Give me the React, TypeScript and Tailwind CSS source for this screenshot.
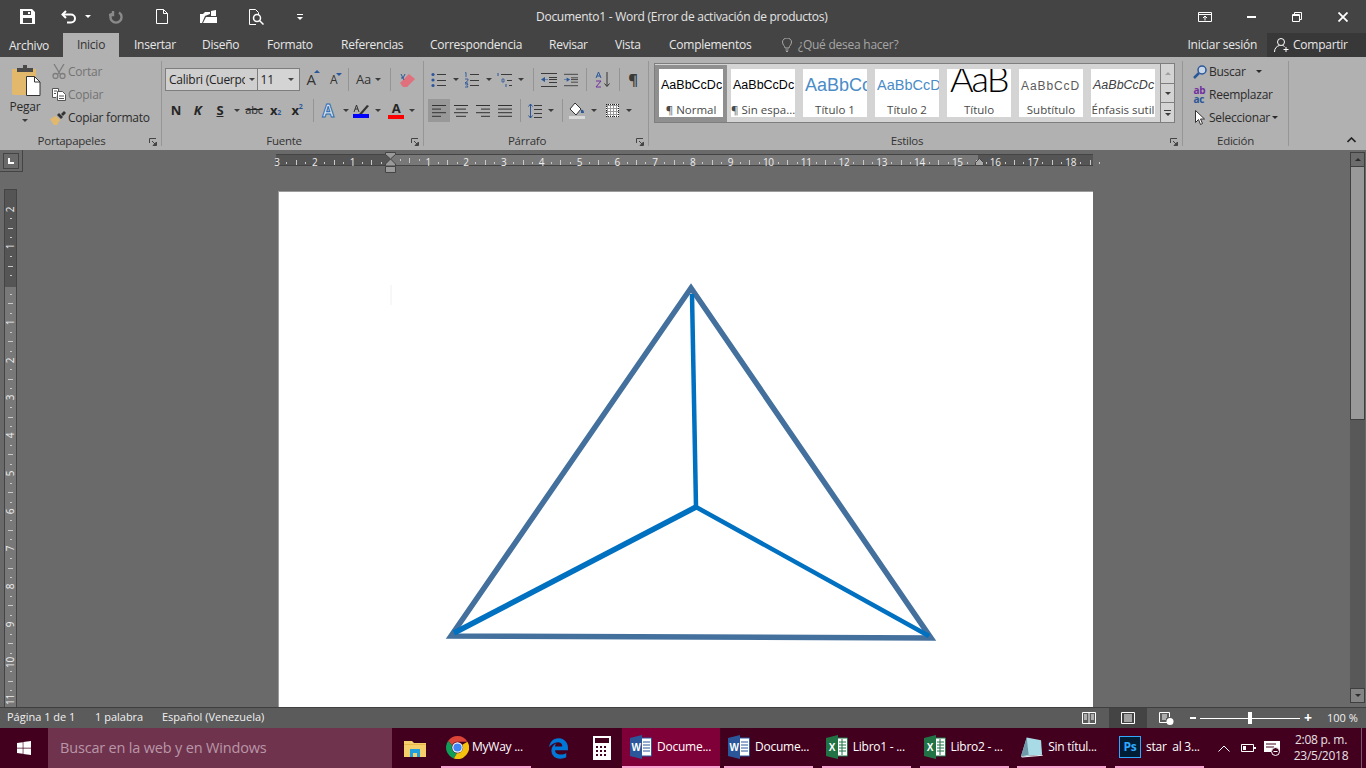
import { FaWindows } from 'react-icons/fa';
import { FaEdgeLegacy } from 'react-icons/fa6';

const TABS = [
  { label: 'Insertar', w: 'w-[68px]' },
  { label: 'Diseño', w: 'w-[65px]' },
  { label: 'Formato', w: 'w-[74px]' },
  { label: 'Referencias', w: 'w-[89px]' },
  { label: 'Correspondencia', w: 'w-[119px]' },
  { label: 'Revisar', w: 'w-[66px]' },
  { label: 'Vista', w: 'w-[54px]' },
  { label: 'Complementos', w: 'w-[113px]' },
];

function Caret({ className = 'text-[#3c3c3c]' }: { className?: string }) {
  return (
    <svg viewBox="0 0 6 3" className={`h-[3px] w-[6px] shrink-0 ${className}`} aria-hidden="true">
      <path d="M0 0h6L3 3z" fill="currentColor" />
    </svg>
  );
}

function Cell({ w, children, className = '' }: { w: string; children?: React.ReactNode; className?: string }) {
  return <div className={`flex h-full shrink-0 items-center justify-center ${w} ${className}`}>{children}</div>;
}

function Sep({ className = '' }: { className?: string }) {
  return <div className={`h-[23px] w-px shrink-0 bg-[#949494] ${className}`} />;
}

function GroupSep() {
  return <div className="my-[4px] w-px shrink-0 bg-[#969696]" />;
}

function Launcher() {
  return (
    <svg viewBox="0 0 8 8" className="absolute bottom-[4px] right-[4px] h-[8px] w-[8px] text-[#444]" fill="none" aria-hidden="true">
      <path d="M.5 5V.5H7" stroke="currentColor" />
      <path d="M3 3l4 4M7.5 4v3.5H4z" stroke="currentColor" fill="currentColor" />
    </svg>
  );
}

function GroupLabel({ children, className = '' }: { children: React.ReactNode; className?: string }) {
  return <div className={`h-[20px] text-center text-[11.5px] leading-[22px] text-[#333] ${className}`}>{children}</div>;
}

function Lines({ rows, x = 0, w = 14, color = '#3a3a3a' }: { rows: number[]; x?: number; w?: number; color?: string }) {
  return (
    <>
      {rows.map((y) => (
        <path key={y} d={`M${x} ${y + 0.5}h${w}`} stroke={color} />
      ))}
    </>
  );
}

function AlignIcon({ kind }: { kind: 'left' | 'center' | 'right' | 'justify' }) {
  const spans =
    kind === 'left'
      ? [[0, 14], [0, 9], [0, 14], [0, 9]]
      : kind === 'center'
        ? [[0, 14], [2, 10], [0, 14], [2, 10]]
        : kind === 'right'
          ? [[0, 14], [5, 9], [0, 14], [5, 9]]
          : [[0, 14], [0, 14], [0, 14], [0, 14]];
  return (
    <svg viewBox="0 0 14 12" className="h-[12px] w-[14px]" fill="none" aria-hidden="true">
      {spans.map(([x, w], i) => (
        <path key={i} d={`M${x} ${i * 3.6 + 0.5}h${w}`} stroke="#333" />
      ))}
    </svg>
  );
}

function ListIcon({ kind }: { kind: 'bullet' | 'number' | 'multi' }) {
  const dot = '#2b579a';
  return (
    <svg viewBox="0 0 16 16" className="h-[16px] w-[16px]" fill="none" aria-hidden="true">
      {kind === 'bullet' && (
        <>
          <circle cx="2" cy="2.5" r="1.6" fill={dot} />
          <circle cx="2" cy="8" r="1.6" fill={dot} />
          <circle cx="2" cy="13.5" r="1.6" fill={dot} />
          <Lines rows={[2, 8, 13]} x={6} w={9} />
        </>
      )}
      {kind === 'number' && (
        <>
          <path d="M1 1l1-.5V5M1 7h3v1.5L1 11h3M1 12h3l-1 1.500 1 1.500H1" stroke={dot} strokeWidth=".9" />
          <Lines rows={[2, 8, 13]} x={6} w={9} />
        </>
      )}
      {kind === 'multi' && (
        <>
          <path d="M1 1v3" stroke={dot} />
          <path d="M5 7h2v3H5z" stroke={dot} strokeWidth=".8" />
          <path d="M9 12v3" stroke={dot} />
          <Lines rows={[2]} x={4} w={11} />
          <Lines rows={[8]} x={10} w={5} />
          <Lines rows={[13]} x={12} w={3} />
        </>
      )}
    </svg>
  );
}

function IndentIcon({ flip }: { flip?: boolean }) {
  return (
    <svg viewBox="0 0 16 14" className="h-[14px] w-[16px]" fill="none" aria-hidden="true">
      <Lines rows={[0, 13]} w={16} />
      <Lines rows={[4, 6, 9]} x={8} w={8} />
      {flip ? (
        <path d="M0 6.500h3V4l4 2.500L3 9V7H0z" fill="#2b579a" />
      ) : (
        <path d="M7 6.500H4V4L0 6.500 4 9V7h3z" fill="#2b579a" />
      )}
    </svg>
  );
}

function QatIcons() {
  return (
    <div className="flex h-full items-center text-white">
      <Cell w="w-[54px]">
        <svg viewBox="0 0 15 15" className="h-[15px] w-[15px]" aria-hidden="true">
          <path fillRule="evenodd" d="M0 0h12l3 3v12H0zM3 2v4h8V2zM3 9v5h9V9z" fill="#fff" />
          <path d="M8 3h2v2H8z" fill="#fff" />
        </svg>
      </Cell>
      <Cell w="w-[30px]">
        <svg viewBox="0 0 16 14" className="h-[14px] w-[16px]" fill="none" aria-hidden="true">
          <path d="M5 1L1.500 4.500 5 8" stroke="#fff" strokeWidth="2" />
          <path d="M2 4.500h8a4 4 0 0 1 0 8H6" stroke="#fff" strokeWidth="2" />
        </svg>
      </Cell>
      <Cell w="w-[8px]">
        <Caret className="text-white" />
      </Cell>
      <Cell w="w-[48px]">
        <svg viewBox="0 0 14 14" className="h-[14px] w-[14px]" fill="none" aria-hidden="true">
          <path d="M4 2.500a5.500 5.500 0 1 0 6 0M4 1v4H0" stroke="#8a8a8a" strokeWidth="2.400" />
        </svg>
      </Cell>
      <Cell w="w-[44px]">
        <svg viewBox="0 0 12 15" className="h-[15px] w-[12px]" fill="none" aria-hidden="true">
          <path d="M.5.500h7l4 4v10H.5zM7.500.500v4h4" stroke="#fff" />
        </svg>
      </Cell>
      <Cell w="w-[48px]">
        <svg viewBox="0 0 17 13" className="h-[13px] w-[17px]" aria-hidden="true">
          <path d="M0 13V4h3l2-2h5v2L5 6 2 13zM3 13l3-6h11v6zM11 1l5-1v6h-5z" fill="#fff" />
        </svg>
      </Cell>
      <Cell w="w-[48px]">
        <svg viewBox="0 0 15 16" className="h-[16px] w-[15px]" fill="none" aria-hidden="true">
          <path d="M7 15.500H.5V.500h6l3 3v2" stroke="#fff" />
          <circle cx="8" cy="9" r="3.500" stroke="#fff" strokeWidth="1.500" />
          <path d="M10.500 11.500l4 4" stroke="#fff" strokeWidth="1.500" />
        </svg>
      </Cell>
      <Cell w="w-[40px]">
        <div className="flex flex-col items-center gap-[2px]">
          <div className="h-px w-[6px] bg-white" />
          <Caret className="text-white" />
        </div>
      </Cell>
    </div>
  );
}

function TitleBar() {
  return (
    <div className="flex h-[33px] shrink-0 items-center bg-[#444444] text-[#e4e4e4]">
      <QatIcons />
      <div className="ml-[216px] whitespace-nowrap text-[12px] tracking-[-0.27px]">
        Documento1 - Word (Error de activación de productos)
      </div>
      <div className="ml-auto flex h-full">
        <Cell w="w-[46px]">
          <svg viewBox="0 0 14 10" className="h-[10px] w-[14px]" fill="none" aria-hidden="true">
            <path d="M.5.500h13v9H.5zM.5 2.500h13" stroke="#fff" />
            <path d="M7 8.500V4.500M5 6l2-2 2 2" stroke="#fff" />
          </svg>
        </Cell>
        <Cell w="w-[46px]">
          <div className="h-[2px] w-[9px] bg-white" />
        </Cell>
        <Cell w="w-[46px]">
          <svg viewBox="0 0 10 10" className="h-[10px] w-[10px]" fill="none" aria-hidden="true">
            <path d="M.5 2.500h7v7h-7zM2.500 2.500v-2h7v7h-2" stroke="#fff" />
            <path d="M.5 3.500h7" stroke="#fff" />
          </svg>
        </Cell>
        <Cell w="w-[46px]">
          <svg viewBox="0 0 10 10" className="h-[10px] w-[10px]" fill="none" aria-hidden="true">
            <path d="M.5.500l9 9M9.500.500l-9 9" stroke="#fff" strokeWidth="1.800" />
          </svg>
        </Cell>
      </div>
    </div>
  );
}

function TabBar() {
  return (
    <div className="flex h-[24px] shrink-0 items-center bg-[#444444] text-[12px] text-[#e8e8e8]">
      <div className="w-[63px] pl-[9px] pt-[2px]">Archivo</div>
      <div className="flex h-full w-[56px] items-center justify-center bg-[#b1b1b1] text-[#333]">Inicio</div>
      <div className="flex h-full pl-[15px]">
        {TABS.map((t) => (
          <div key={t.label} className={`flex items-center whitespace-nowrap ${t.w}`}>
            {t.label}
          </div>
        ))}
      </div>
      <svg viewBox="0 0 10 14" className="h-[14px] w-[10px] shrink-0" fill="none" aria-hidden="true">
        <path d="M3 10c0-2-2.500-3-2.500-6a4.500 4 0 0 1 9 0c0 3-2.500 4-2.500 6zM3.500 12h3M4 13.500h2" stroke="#a8a8a8" />
      </svg>
      <div className="ml-[6px] whitespace-nowrap text-[#a6a6a6]">¿Qué desea hacer?</div>
      <div className="ml-auto whitespace-nowrap">Iniciar sesión</div>
      <div className="ml-[10px] flex h-full w-[99px] items-center gap-[3px] bg-[#383838] pl-[7px]">
        <svg viewBox="0 0 16 16" className="h-[16px] w-[16px]" fill="none" aria-hidden="true">
          <circle cx="7" cy="5" r="3.500" stroke="#fff" />
          <path d="M.5 15c0-4 2.500-6 5-6.500M8.500 8.500c1 .2 1.500.5 2 1M12 10v5M9.500 12.500h5" stroke="#fff" />
        </svg>
        <span>Compartir</span>
      </div>
    </div>
  );
}

function ClipRow({ icon, children, muted }: { icon: React.ReactNode; children: React.ReactNode; muted?: boolean }) {
  return (
    <div className={`flex h-[23px] items-center whitespace-nowrap text-[12px] ${muted ? 'text-[#737373]' : 'text-[#2b2b2b]'}`}>
      <div className="flex w-[18px] justify-center">{icon}</div>
      {children}
    </div>
  );
}

function Portapapeles() {
  return (
    <div className="relative flex w-[161px] shrink-0 flex-col">
      <div className="flex h-[74px] pt-[3px]">
        <div className="flex w-[50px] flex-col items-center text-[12px] text-[#2b2b2b]">
          <svg viewBox="0 0 29 31" className="ml-[3px] mt-[5px] h-[31px] w-[29px]" aria-hidden="true">
            <path d="M0 4h24v26H2a2 2 0 0 1-2-2z" fill="#e2b96c" />
            <path d="M5 3h6V0h4v3h6v4H5z" fill="#4a4a4a" />
            <path d="M14.500 11.500h8l5.500 5.500v13.500H14.500z" fill="#fff" stroke="#333" />
            <path d="M22.500 11.500V17H28" fill="none" stroke="#333" />
          </svg>
          <div className="mt-[2px] leading-[18px]">Pegar</div>
          <div className="mt-[3px]">
            <Caret />
          </div>
        </div>
        <div className="flex flex-col">
          <ClipRow
            muted
            icon={
              <svg viewBox="0 0 14 15" className="h-[15px] w-[14px]" fill="none" aria-hidden="true">
                <path d="M2 0l6 10M12 0L6 10" stroke="#7d7d7d" strokeWidth="1.300" />
                <circle cx="3.500" cy="12" r="2.500" stroke="#7d7d7d" strokeWidth="1.300" />
                <circle cx="10.500" cy="12" r="2.500" stroke="#7d7d7d" strokeWidth="1.300" />
              </svg>
            }
          >
            Cortar
          </ClipRow>
          <ClipRow
            muted
            icon={
              <svg viewBox="0 0 14 13" className="h-[13px] w-[14px]" fill="none" aria-hidden="true">
                <path d="M4 9.500H.5V.500h6v3" fill="#fff" stroke="#555" />
                <path d="M5.500 3.500h5l3 3v6h-8z" fill="#fff" stroke="#555" />
                <path d="M7 8h5M7 10.500h5M2 3h3M2 5.500h2" stroke="#555" />
              </svg>
            }
          >
            Copiar
          </ClipRow>
          <ClipRow
            icon={
              <svg viewBox="0 0 16 14" className="-ml-[2px] h-[14px] w-[16px]" aria-hidden="true">
                <path d="M0 8l6-3 4 4-3 5H4z" fill="#e2b96c" />
                <path d="M7 4l2-2 4 4-2 2z" fill="#333" />
                <path d="M11 3l3-3 2 2-3 3z" fill="#333" />
              </svg>
            }
          >
            Copiar formato
          </ClipRow>
        </div>
      </div>
      <GroupLabel className="pr-[18px]">Portapapeles</GroupLabel>
      <Launcher />
    </div>
  );
}

function Fuente() {
  return (
    <div className="relative flex w-[261px] shrink-0 flex-col">
      <div className="h-[74px] pl-[3px] pt-[11px]">
        <div className="flex h-[23px] items-center">
          <div className="flex h-[23px] w-[94px] items-center border border-[#7e7e7e] bg-[#cfcfcf] pl-[3px] text-[12px] text-[#222]">
            <div className="w-[76px] overflow-hidden whitespace-nowrap">Calibri (Cuerpo)</div>
            <Caret className="ml-[4px] text-[#444]" />
          </div>
          <div className="flex h-[23px] w-[43px] items-center justify-between border border-l-0 border-[#7e7e7e] bg-[#d4d4d4] pl-[3px] pr-[5px] text-[12px] text-[#222]">
            11
            <Caret className="text-[#444]" />
          </div>
          <Cell w="w-[22px]">
            <span className="relative text-[15px] text-[#333]">
              A<span className="absolute -right-[4px] top-[2px] h-0 w-0 border-x-[3px] border-b-[3px] border-x-transparent border-b-[#2b579a]" />
            </span>
          </Cell>
          <Cell w="w-[23px]">
            <span className="relative text-[12px] text-[#333]">
              A<span className="absolute -right-[5px] top-[2px] h-0 w-0 border-x-[3px] border-t-[3px] border-x-transparent border-t-[#2b579a]" />
            </span>
          </Cell>
          <Sep className="ml-[3px]" />
          <div className="ml-[7px] flex items-center gap-[4px] text-[13px] text-[#333]">
            Aa
            <Caret />
          </div>
          <Sep className="ml-[9px]" />
          <Cell w="w-[32px]">
            <svg viewBox="0 0 15 14" className="h-[14px] w-[15px]" aria-hidden="true">
              <path d="M3 14L0 10l9-9 6 5-8 8z" fill="#e0707c" />
              <path d="M1 1l3 6M5 1L3 5H1" stroke="#2b579a" fill="none" />
            </svg>
          </Cell>
        </div>
        <div className="mt-[8px] flex h-[23px] items-center text-[#262626]">
          <Cell w="w-[22px]" className="text-[13px] font-bold">N</Cell>
          <Cell w="w-[21px]" className="text-[13px] font-bold italic">K</Cell>
          <Cell w="w-[24px]" className="text-[13px] font-bold underline">S</Cell>
          <Cell w="w-[9px]"><Caret /></Cell>
          <Cell w="w-[26px]" className="text-[11px] line-through">abc</Cell>
          <Cell w="w-[17px]" className="text-[13px] font-bold">
            x<span className="mt-[6px] text-[7px] text-[#2b579a]">2</span>
          </Cell>
          <Cell w="w-[26px]" className="text-[13px] font-bold">
            x<span className="-mt-[6px] text-[7px] text-[#2b579a]">2</span>
          </Cell>
          <Sep className="ml-[3px]" />
          <Cell w="w-[28px]" className="text-[17px] font-bold text-[#dce6f1] [-webkit-text-stroke:1px_#2b6cb0]">A</Cell>
          <Cell w="w-[8px]"><Caret /></Cell>
          <Cell w="w-[22px]">
            <div className="flex flex-col items-center">
              <svg viewBox="0 0 16 11" className="h-[11px] w-[16px]" aria-hidden="true">
                <path d="M7 10l7-8 2 1-7 8H6z" fill="#333" />
                <path d="M1 9l2.500-7L6 9M2 6h3" fill="none" stroke="#333" />
              </svg>
              <div className="h-[4px] w-[16px] bg-[#0000ff]" />
            </div>
          </Cell>
          <Cell w="w-[12px]"><Caret /></Cell>
          <Cell w="w-[24px]">
            <div className="flex flex-col items-center">
              <span className="text-[13px] font-bold leading-[11px]">A</span>
              <div className="mt-[1px] h-[4px] w-[16px] bg-[#ff0000]" />
            </div>
          </Cell>
          <Cell w="w-[8px]"><Caret /></Cell>
        </div>
      </div>
      <GroupLabel className="pr-[17px]">Fuente</GroupLabel>
      <Launcher />
    </div>
  );
}

function Parrafo() {
  return (
    <div className="relative flex w-[224px] shrink-0 flex-col">
      <div className="h-[74px] pt-[11px]">
        <div className="flex h-[23px] items-center">
          <Cell w="w-[29px]"><ListIcon kind="bullet" /></Cell>
          <Cell w="w-[5px]"><Caret /></Cell>
          <Cell w="w-[27px]"><ListIcon kind="number" /></Cell>
          <Cell w="w-[8px]"><Caret /></Cell>
          <Cell w="w-[24px]"><ListIcon kind="multi" /></Cell>
          <Cell w="w-[8px]"><Caret /></Cell>
          <Sep className="ml-[8px]" />
          <Cell w="w-[30px]"><IndentIcon /></Cell>
          <Cell w="w-[14px]"><IndentIcon flip /></Cell>
          <Sep className="ml-[8px]" />
          <Cell w="w-[32px]">
            <svg viewBox="0 0 16 17" className="h-[17px] w-[16px]" fill="none" aria-hidden="true">
              <path d="M1 7l2.500-6L6 7M1.800 5h3.500" stroke="#2b579a" />
              <path d="M1 10h5l-5 6h5" stroke="#7030a0" />
              <path d="M12 1v14M9.500 12.500l2.500 3 2.500-3" stroke="#333" />
            </svg>
          </Cell>
          <Sep />
          <Cell w="w-[26px]" className="text-[15px] font-bold text-[#3a3a3a]">¶</Cell>
        </div>
        <div className="mt-[8px] flex h-[23px] items-center pl-[4px]">
          <Cell w="w-[22px]" className="bg-[#989898]"><AlignIcon kind="left" /></Cell>
          <Cell w="w-[22px]"><AlignIcon kind="center" /></Cell>
          <Cell w="w-[22px]"><AlignIcon kind="right" /></Cell>
          <Cell w="w-[22px]"><AlignIcon kind="justify" /></Cell>
          <Sep className="ml-[4px]" />
          <Cell w="w-[28px]">
            <svg viewBox="0 0 14 16" className="h-[16px] w-[14px]" fill="none" aria-hidden="true">
              <path d="M2.500 1v14M.5 3.500l2-2.500 2 2.500M.5 12.500l2 2.500 2-2.500" stroke="#2b579a" />
              <Lines rows={[2, 6, 10, 14]} x={6} w={8} />
            </svg>
          </Cell>
          <Cell w="w-[4px]"><Caret /></Cell>
          <Sep className="ml-[9px]" />
          <Cell w="w-[28px]">
            <div className="flex flex-col items-center">
              <svg viewBox="0 0 16 12" className="h-[12px] w-[16px]" aria-hidden="true">
                <path d="M6 0l6 6-5 6-6-6z" fill="#fff" stroke="#333" />
                <path d="M12 7c2-1 3 1 3 3h-3z" fill="#2b579a" />
              </svg>
              <div className="mt-[1px] h-[3px] w-[16px] bg-[#d9d9d9]" />
            </div>
          </Cell>
          <Cell w="w-[6px]"><Caret /></Cell>
          <Cell w="w-[30px]">
            <div className="h-[13px] w-[13px] border border-dotted border-[#222] bg-white [background-image:linear-gradient(#999_1px,transparent_1px),linear-gradient(90deg,#999_1px,transparent_1px)] [background-size:3px_3px]" />
          </Cell>
          <Cell w="w-[4px]"><Caret /></Cell>
        </div>
      </div>
      <GroupLabel className="pr-[18px]">Párrafo</GroupLabel>
      <Launcher />
    </div>
  );
}

function StyleItem({ label, children }: { label: string; children: React.ReactNode }) {
  return (
    <div className="flex h-[48px] w-[64px] shrink-0 flex-col overflow-hidden bg-white">
      <div className="flex h-[33px] items-center overflow-hidden whitespace-nowrap pl-[2px] font-['Liberation_Sans',sans-serif] tracking-normal">
        {children}
      </div>
      <div className="whitespace-nowrap text-center text-[11.5px] leading-[15px] tracking-normal text-[#4a4a4a]">{label}</div>
    </div>
  );
}

function Estilos() {
  return (
    <div className="relative flex w-[533px] shrink-0 flex-col">
      <div className="h-[74px] pl-[5px] pt-[6px]">
        <div className="flex h-[60px] w-[521px] border border-[#7e7e7e] bg-[#d4d4d4]">
          <div className="flex h-[58px] w-[506px] items-start">
            <div className="mt-[1px] flex h-[57px] w-[72px] shrink-0 items-start border-[4px] border-[#8f8f8f] bg-[#8f8f8f]">
              <StyleItem label="¶ Normal">
                <span className="text-[12.5px] text-black">AaBbCcDc</span>
              </StyleItem>
            </div>
            <div className="mt-[5px] flex gap-[8px] pl-[4px]">
              <StyleItem label="¶ Sin espa...">
                <span className="text-[12.5px] text-black">AaBbCcDc</span>
              </StyleItem>
              <StyleItem label="Título 1">
                <span className="text-[18px] text-[#4a8cc7]">AaBbCc</span>
              </StyleItem>
              <StyleItem label="Título 2">
                <span className="text-[14.5px] text-[#4a8cc7]">AaBbCcD</span>
              </StyleItem>
              <StyleItem label="Título">
                <span className="-mt-[15px] pl-[1px] font-['Lato',sans-serif] text-[36px] font-light leading-[36px] tracking-[-2px] text-black">AaB</span>
              </StyleItem>
              <StyleItem label="Subtítulo">
                <span className="text-[12px] tracking-[0.9px] text-[#5a5a5a]">AaBbCcD</span>
              </StyleItem>
              <StyleItem label="Énfasis sutil">
                <span className="text-[12.5px] italic text-[#404040]">AaBbCcDc</span>
              </StyleItem>
            </div>
          </div>
          <div className="flex w-[14px] flex-col border-l border-[#7e7e7e]">
            <div className="flex h-[20px] items-center justify-center border-b border-[#7e7e7e]">
              <Caret className="rotate-180 text-[#a0a0a0]" />
            </div>
            <div className="flex h-[19px] items-center justify-center border-b border-[#7e7e7e]">
              <Caret />
            </div>
            <div className="flex flex-1 flex-col items-center justify-center gap-[2px]">
              <div className="h-px w-[7px] bg-[#3c3c3c]" />
              <Caret />
            </div>
          </div>
        </div>
      </div>
      <GroupLabel className="pr-[17px]">Estilos</GroupLabel>
      <Launcher />
    </div>
  );
}

function Edicion() {
  return (
    <div className="flex w-[105px] shrink-0 flex-col">
      <div className="h-[74px] pl-[8px] pt-[3px]">
        <ClipRow
          icon={
            <svg viewBox="0 0 14 14" className="h-[14px] w-[14px]" fill="none" aria-hidden="true">
              <circle cx="9" cy="5" r="4" fill="#c9d6e6" stroke="#2b579a" strokeWidth="1.500" />
              <path d="M6 8l-5 5" stroke="#2b579a" strokeWidth="2.500" />
            </svg>
          }
        >
          Buscar
          <Caret className="ml-[10px]" />
        </ClipRow>
        <ClipRow
          icon={
            <div className="-ml-[1px] flex flex-col text-[10px] font-bold leading-[9px]">
              <span className="text-[#7030a0]">ab</span>
              <span className="text-[#2b579a]">ac</span>
            </div>
          }
        >
          Reemplazar
        </ClipRow>
        <ClipRow
          icon={
            <svg viewBox="0 0 10 15" className="h-[15px] w-[10px]" aria-hidden="true">
              <path d="M.5.500v12l3-3 2 5 2-1-2-4.500h4z" fill="#fff" stroke="#333" />
            </svg>
          }
        >
          Seleccionar
          <Caret className="ml-[2px]" />
        </ClipRow>
      </div>
      <GroupLabel>Edición</GroupLabel>
    </div>
  );
}

function Ribbon() {
  return (
    <div className="flex h-[93px] shrink-0 bg-[#b1b1b1]">
      <Portapapeles />
      <GroupSep />
      <Fuente />
      <GroupSep />
      <Parrafo />
      <GroupSep />
      <Estilos />
      <GroupSep />
      <Edicion />
      <GroupSep />
      <div className="flex flex-1 items-end justify-end pb-[7px] pr-[10px]">
        <svg viewBox="0 0 9 6" className="h-[6px] w-[9px]" fill="none" aria-hidden="true">
          <path d="M.5 5l4-4 4 4" stroke="#222" strokeWidth="1.600" />
        </svg>
      </div>
    </div>
  );
}

function HCell({ label, w = 'w-[37.8px]' }: { label?: number; w?: string }) {
  return (
    <div className={`grid h-full shrink-0 grid-cols-[9.45px_9.45px_9.45px_9.45px] items-center ${w}`}>
      <div className="relative flex h-full w-0 items-center justify-center text-[10px] text-[#eee]">{label}</div>
      <div className="h-[2px] w-px bg-[#c8c8c8]" />
      <div className="h-[5px] w-px bg-[#c8c8c8]" />
      <div className="h-[2px] w-px bg-[#c8c8c8]" />
    </div>
  );
}

function HRuler() {
  const left = [3, 2, 1, undefined];
  const right = Array.from({ length: 17 }, (_, i) => i + 1);
  return (
    <div className="relative flex h-[12px] w-[817px] shrink-0 border-y border-[#444] bg-[linear-gradient(90deg,#555_114px,#787878_114px,#787878_702px,#555_702px)] pl-px">
      {left.map((n, i) => (
        <HCell key={i} label={n} />
      ))}
      {right.map((n) => (
        <HCell key={n} label={n} />
      ))}
      <HCell label={18} w="w-[22px]" />
      {/* indent markers */}
      <svg viewBox="0 0 11 21" className="absolute -top-[3px] left-[109px] h-[21px] w-[11px]" aria-hidden="true">
        <path d="M.5.500h10v2L5.500 7 .5 2.500z" fill="#9a9a9a" stroke="#444" />
        <path d="M5.500 7l5 5v2H.5v-2z" fill="#9a9a9a" stroke="#444" />
        <path d="M.5 14.500h10v6H.5z" fill="#9a9a9a" stroke="#444" />
      </svg>
      <svg viewBox="0 0 9 8" className="absolute left-[699px] top-[3px] h-[8px] w-[9px]" aria-hidden="true">
        <path d="M4.500.500l4 4v3h-8v-3z" fill="#a8a8a8" stroke="#444" />
      </svg>
    </div>
  );
}

function VCell({ label }: { label?: number }) {
  return (
    <div className="grid w-full shrink-0 grid-rows-[9.45px_9.45px_9.45px_9.45px] justify-items-center">
      <div className="flex h-0 w-full items-center justify-center text-[10px] text-[#eee]">
        <span className="-rotate-90">{label}</span>
      </div>
      <div className="h-px w-[2px] bg-[#c8c8c8]" />
      <div className="h-px w-[5px] bg-[#c8c8c8]" />
      <div className="h-px w-[2px] bg-[#c8c8c8]" />
    </div>
  );
}

function VRuler() {
  const below = Array.from({ length: 11 }, (_, i) => i + 1);
  return (
    <div className="flex min-h-0 w-[13px] flex-1 flex-col overflow-hidden border-x border-t border-[#444] bg-[linear-gradient(180deg,#555_97px,#787878_97px)] pt-[19px]">
      <VCell label={2} />
      <VCell label={1} />
      <VCell />
      {below.map((n) => (
        <VCell key={n} label={n} />
      ))}
    </div>
  );
}

function Page() {
  return (
    <div className="relative ml-[2px] mt-[25px] flex-1 border-l border-t border-[#9c9c9c] bg-white">
      <svg viewBox="0 0 814 515" className="absolute inset-0 h-full w-full" fill="none" aria-hidden="true">
        <path d="M112 93v20" stroke="#f0f0f0" />
        <path d="M412 96L172 444l480 2z" stroke="#44709d" strokeWidth="5.500" />
        <path d="M413 102l4 213" stroke="#0070c0" strokeWidth="4.500" />
        <path d="M417 315L175 441" stroke="#0070c0" strokeWidth="5.500" />
        <path d="M417 315l233 129" stroke="#0070c0" strokeWidth="4.500" />
      </svg>
    </div>
  );
}

function Scrollbar() {
  return (
    <div className="flex h-full w-[15px] flex-col pb-[4px] pt-[2px]">
      <div className="flex h-[15px] items-center justify-center border border-[#3f3f3f] bg-[#6c6c6c]">
        <Caret className="rotate-180 text-[#2b2b2b]" />
      </div>
      <div className="h-[253px] border border-t-0 border-[#3f3f3f] bg-[#999999]" />
      <div className="flex-1 bg-[#585858]" />
      <div className="flex h-[15px] items-center justify-center border border-[#3f3f3f] bg-[#848484]">
        <Caret className="text-[#2b2b2b]" />
      </div>
    </div>
  );
}

function DocArea() {
  return (
    <div className="flex h-[557px] shrink-0 bg-[#6a6a6a]">
      <div className="flex w-[276px] shrink-0 flex-col">
        <div className="flex h-[22px] w-[23px] shrink-0 items-center justify-center border-b border-r border-[#444]">
          <div className="flex h-[16px] w-[16px] items-center justify-center border border-[#444]">
            <svg viewBox="0 0 6 6" className="h-[6px] w-[6px]" aria-hidden="true">
              <path d="M0 0h2v4h4v2H0z" fill="#fff" />
            </svg>
          </div>
        </div>
        <div className="ml-[4px] mt-[17px] flex min-h-0 flex-1 flex-col">
          <VRuler />
        </div>
      </div>
      <div className="flex w-[817px] shrink-0 flex-col pt-[4px]">
        <HRuler />
        <Page />
      </div>
      <div className="flex flex-1 justify-end pr-px">
        <Scrollbar />
      </div>
    </div>
  );
}

function StatusBar() {
  return (
    <div className="flex h-[21px] shrink-0 items-center border-t border-[#3f3f3f] bg-[#5b5b5b] text-[11px] tracking-normal text-[#f0f0f0]">
      <div className="flex items-center pb-[1px]">
        <div className="w-[95px] whitespace-nowrap pl-[7px]">Página 1 de 1</div>
        <div className="w-[67px] whitespace-nowrap">1 palabra</div>
        <div className="whitespace-nowrap">Español (Venezuela)</div>
      </div>
      <div className="ml-auto flex h-full items-center">
        <Cell w="w-[38px]">
          <svg viewBox="0 0 14 12" className="h-[12px] w-[14px]" fill="none" aria-hidden="true">
            <path d="M.5.500h13v11H.5zM7 .5v11M2 3h3M2 5h3M2 7h3M9 3h3M9 5h3M9 7h3" stroke="#fff" />
          </svg>
        </Cell>
        <Cell w="w-[38px]" className="ml-px bg-[#444]">
          <svg viewBox="0 0 14 12" className="h-[12px] w-[14px]" fill="none" aria-hidden="true">
            <path d="M.5.500h13v11H.5zM3 3h8M3 5h8M3 7h8M3 9h8" stroke="#fff" />
          </svg>
        </Cell>
        <Cell w="w-[38px]">
          <svg viewBox="0 0 15 13" className="h-[13px] w-[15px]" fill="none" aria-hidden="true">
            <path d="M8 10.500H.5V.500h10V5M3 3h5M3 5h5M3 7h4" stroke="#fff" />
            <circle cx="11" cy="9.500" r="3.500" fill="#fff" />
          </svg>
        </Cell>
        <Cell w="w-[15px]">
          <div className="h-[2px] w-[6px] bg-white" />
        </Cell>
        <div className="relative flex h-full w-[100px] items-center">
          <div className="h-px w-full bg-white" />
          <div className="absolute left-[48px] top-[4px] h-[12px] w-[4px] bg-white" />
        </div>
        <Cell w="w-[16px]">
          <span className="text-[14px] font-bold leading-none text-white">+</span>
        </Cell>
        <div className="w-[50px] whitespace-nowrap pl-[11px]">100 %</div>
      </div>
    </div>
  );
}

function WordIcon() {
  return (
    <svg viewBox="0 0 22 24" className="h-[24px] w-[22px] shrink-0" aria-hidden="true">
      <path d="M9 3h12.500v18H9z" fill="#fff" stroke="#2b579a" />
      <path d="M13 7h7M13 10h7M13 13h7M13 16h7" stroke="#2b579a" strokeWidth="1" />
      <path d="M0 3l12-3v24L0 21z" fill="#2b579a" />
      <text x="6" y="16" textAnchor="middle" fontSize="10" fontWeight="700" fill="#fff" fontFamily="Liberation Sans">W</text>
    </svg>
  );
}

function ExcelIcon() {
  return (
    <svg viewBox="0 0 22 24" className="h-[24px] w-[22px] shrink-0" aria-hidden="true">
      <path d="M9 3h12.500v18H9z" fill="#fff" stroke="#217346" />
      <path d="M13 7h7M13 10h7M13 13h7M13 16h7M16 4v16" stroke="#217346" strokeWidth="1" />
      <path d="M0 3l12-3v24L0 21z" fill="#217346" />
      <text x="6" y="16" textAnchor="middle" fontSize="10" fontWeight="700" fill="#fff" fontFamily="Liberation Sans">X</text>
    </svg>
  );
}

function ChromeIcon() {
  return (
    <svg viewBox="0 0 24 24" className="h-[23px] w-[23px] shrink-0" aria-hidden="true">
      <path d="M12 0a12 12 0 0 1 10.400 6H12a6 6 0 0 0-5.600 3.800L2.300 5A12 12 0 0 1 12 0z" fill="#db4437" />
      <path d="M2.300 5l4.100 4.800a6 6 0 0 0 5 8.200L8.200 23.400A12 12 0 0 1 2.300 5z" fill="#0f9d58" />
      <path d="M22.400 6A12 12 0 0 1 8.200 23.400L11.400 18A6 6 0 0 0 17 9z" fill="#f4c20d" />
      <circle cx="12" cy="12" r="5.500" fill="#fff" />
      <circle cx="12" cy="12" r="4.300" fill="#4285f4" />
    </svg>
  );
}

function TaskItem({
  icon,
  label,
  w,
  pl = 'pl-[4px]',
  active,
}: {
  icon: React.ReactNode;
  label: string;
  w: string;
  pl?: string;
  active?: boolean;
}) {
  return (
    <div
      className={`flex h-full shrink-0 items-center gap-[5px] border-b-2 border-[#f7a3d2] ${pl} ${w} ${
        active ? 'bg-[#7f0038]' : ''
      }`}
    >
      {icon}
      <span className="whitespace-pre text-[12px] text-white">{label}</span>
    </div>
  );
}

function Taskbar() {
  return (
    <div className="flex h-[40px] shrink-0 bg-[#42001e]">
      <Cell w="w-[48px]">
        <FaWindows className="h-[16px] w-[16px] text-white" />
      </Cell>
      <div className="flex h-full w-[344px] items-center bg-[#70334d] pl-[12px] text-[14.5px] tracking-[-0.18px] text-[#b897a8]">
        Buscar en la web y en Windows
      </div>
      <Cell w="w-[49px]" className="pr-[3px]">
        <svg viewBox="0 0 22 18" className="h-[18px] w-[22px]" aria-hidden="true">
          <path d="M0 2h8l2 2h12v14H0z" fill="#f5cf6c" />
          <path d="M0 5h22v1H0z" fill="#e8b94a" />
          <path d="M6 10h10v8H6z" fill="#1f9fe0" />
          <path d="M9 14h4v4H9z" fill="#f5cf6c" />
        </svg>
      </Cell>
      <div className="flex h-full w-[90px] shrink-0 items-center gap-[3px] border-b-2 border-[#f7a3d2] pl-[5px]">
        <ChromeIcon />
        <span className="whitespace-nowrap text-[12px] text-white">MyWay ...</span>
      </div>
      <Cell w="w-[50px]" className="pl-[4px]">
        <FaEdgeLegacy className="h-[21px] w-[21px] text-[#0078d7]" />
      </Cell>
      <Cell w="w-[41px]">
        <svg viewBox="0 0 18 24" className="h-[24px] w-[18px]" aria-hidden="true">
          <path fillRule="evenodd" d="M0 0h18v24H0zM2 2v5h14V2zM3 10v2h2v-2zM7 10v2h2v-2zM11 10v2h2v-2zM3 14v2h2v-2zM7 14v2h2v-2zM11 14v2h2v-2zM3 18v2h2v-2zM7 18v2h2v-2zM11 18v2h2v-2z" fill="#fff" />
        </svg>
      </Cell>
      <TaskItem active w="w-[98px]" pl="pl-[8px]" icon={<WordIcon />} label="Docume..." />
      <div className="ml-[4px] flex h-full gap-[8.75px]">
        <TaskItem w="w-[89px]" icon={<WordIcon />} label="Docume..." />
        <TaskItem w="w-[89px]" icon={<ExcelIcon />} label="Libro1 - ..." />
        <TaskItem w="w-[89px]" icon={<ExcelIcon />} label="Libro2 - ..." />
        <TaskItem
          w="w-[89px]"
          pl="pl-[3px]"
          icon={
            <svg viewBox="0 0 24 22" className="h-[22px] w-[23px] shrink-0" aria-hidden="true">
              <path d="M7 1l15 3 1 15-22 2z" fill="#a8dbe6" />
              <path d="M7 1L1 21l8-2z" fill="#6f98a8" />
              <path d="M1 21l22-2 1 1-22 2z" fill="#e8f2f4" />
            </svg>
          }
          label="Sin títul..."
        />
        <TaskItem
          w="w-[89px]"
          icon={
            <div className="flex h-[22px] w-[22px] shrink-0 items-center justify-center border border-[#31a8ff] bg-[#001e36] text-[12px] font-bold text-[#31a8ff]">
              Ps
            </div>
          }
          label="star  al 3..."
        />
      </div>
      <Cell w="w-[33px]" className="ml-[3px]">
        <svg viewBox="0 0 12 7" className="h-[7px] w-[12px]" fill="none" aria-hidden="true">
          <path d="M.5 6.500l5.500-5.500 5.500 5.500" stroke="#fff" />
        </svg>
      </Cell>
      <Cell w="w-[17px]">
        <svg viewBox="0 0 15 8" className="h-[8px] w-[15px]" fill="none" aria-hidden="true">
          <path d="M.5.500h12v7H.5z" stroke="#fff" />
          <path d="M2 2h3v4H2z" fill="#fff" />
          <path d="M13 3h2v2h-2z" fill="#fff" />
        </svg>
      </Cell>
      <Cell w="w-[29px]">
        <svg viewBox="0 0 16 15" className="h-[15px] w-[16px]" aria-hidden="true">
          <path d="M0 0h16v10H7v1H0z" fill="#fff" />
          <path d="M2 3h10M2 6h8" stroke="#42001e" />
          <circle cx="11.500" cy="10.500" r="4" fill="#42001e" stroke="#fff" />
          <path d="M9.500 10.500h4" stroke="#fff" />
        </svg>
      </Cell>
      <div className="w-[70px] shrink-0 pt-[4px] text-center text-[12px] leading-[16px] text-[#e8e0e4]">
        <div>2:08 p. m.</div>
        <div>23/5/2018</div>
      </div>
      <div className="ml-auto mr-[4px] w-px bg-[#7a5a68]" />
    </div>
  );
}

export default function App() {
  return (
    <div className="flex h-[768px] w-[1366px] flex-col overflow-hidden font-['Open_Sans',sans-serif] tracking-[-0.25px]">
      <TitleBar />
      <TabBar />
      <Ribbon />
      <DocArea />
      <StatusBar />
      <Taskbar />
    </div>
  );
}
